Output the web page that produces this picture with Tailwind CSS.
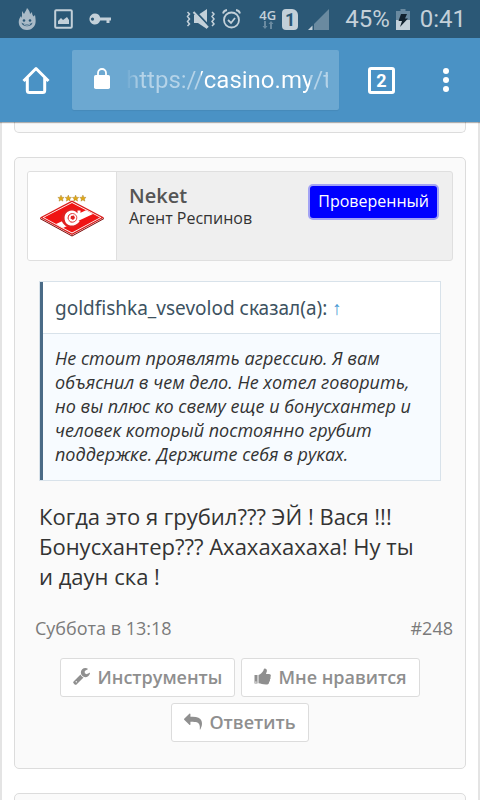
<!DOCTYPE html>
<html lang="ru">
<head>
  <meta charset="UTF-8" />
  <meta name="viewport" content="width=device-width, initial-scale=1.0" />
  <title>Форум - casino.my</title>
  <script src="https://cdn.jsdelivr.net/npm/@tailwindcss/browser@4"></script>
</head>
<body class="bg-white font-['Open_Sans',sans-serif] text-[#333] h-screen overflow-hidden flex flex-col">

  <!-- Status bar -->
  <div class="bg-[#2b5876] h-[38px] shrink-0 flex items-center justify-between pl-[18px] pr-3.5 font-[Roboto,sans-serif] text-[#c3d0d9]">
    <div class="flex items-center gap-4">
      <svg class="w-[18px] h-[22px]" viewBox="0 0 18 22" fill="#a9bac7">
        <path d="M9 0c2 2 3 4 3 6l2-2c0 2 .5 3 1.500 4.500L17 7c1 6 1 9-1 11.500C14 21 12 22 9 22s-5.500-1-7-3.500C0 15 .5 11 3 8l1 2 0-7 2 3C7 4 8.500 2 9 0z" />
        <g fill="#2b5876">
          <circle cx="6" cy="12.500" r="1.300" />
          <circle cx="12" cy="12.500" r="1.300" />
          <path d="M3.500 14.500c2 2 9 2 11 0-.5 5-10.500 5-11 0z" />
          <path d="M5.500 15.800c2 .8 5 .8 7 0-.5 2.500-6.500 2.500-7 0z" fill="#a9bac7" />
        </g>
      </svg>
      <svg class="w-[19px] h-5 ml-0.5" viewBox="0 0 19 20">
        <rect x="1.200" y="1.200" width="16.600" height="17.600" rx="1" fill="none" stroke="#c3d0d9" stroke-width="2" />
        <path d="M4 15v-3l3-3 2 2 4-3 2 3v4z" fill="#c3d0d9" />
      </svg>
      <svg class="w-[22px] h-[13px]" viewBox="0 0 22 13" fill="#c3d0d9">
        <path fill-rule="evenodd" d="M6 .5a5.500 5.500 0 0 1 5.200 4H22v3h-1.500V10h-3V7.500h-6.300A5.500 5.500 0 1 1 6 .5zM3.500 4.500a1.600 1.600 0 1 0 0 3.200 1.600 1.600 0 0 0 0-3.200z" />
      </svg>
    </div>
    <div class="flex items-center">
      <svg class="w-[30px] h-[22px]" viewBox="0 0 30 22" fill="none" stroke="#c3d0d9" stroke-width="1.500">
        <path d="M1.500 4l2 2-2 2.500 2 2.500-2 2.500 2 2.500-2 2M26 4l2 2-2 2.500 2 2.500-2 2.500 2 2.500-2 2" />
        <path d="M8 7h4l9-6v20l-9-6H8z" fill="#c3d0d9" stroke="none" />
        <path d="M8.500 2.500L23 18" stroke="#2b5876" stroke-width="2" />
        <path d="M7.500 4L22 19.500" stroke-width="2" />
      </svg>
      <svg class="w-[19px] h-5 ml-1.5" viewBox="0 0 19 20" fill="none" stroke="#c3d0d9" stroke-width="1.800">
        <circle cx="9.500" cy="11" r="7.500" />
        <path d="M6 11l3 3 4-5M1 4.500C1.500 2.500 3 1.300 5 1M18 4.500C17.500 2.500 16 1.300 14 1" />
      </svg>
      <div class="ml-[18px] flex flex-col items-center">
        <span class="text-[13px] leading-3 font-semibold font-['Open_Sans',sans-serif]">4G</span>
        <svg class="w-3 h-2" viewBox="0 0 12 8" fill="#6a8aa0">
          <path d="M2 0h2v5h1.500L3 8 .5 5H2zM8 8h2V3h1.500L9 0 6.500 3H8z" />
        </svg>
      </div>
      <div class="ml-1.5 w-4 h-[21px] rounded-sm rounded-tr-md bg-[#c3d0d9] text-[#2b5876] text-lg leading-[21px] font-bold text-center">1</div>
      <svg class="w-[21px] h-[21px] ml-2.5" viewBox="0 0 21 21">
        <path d="M6 15L21 0v21H6z" fill="#6a8aa0" />
        <path d="M0 21l4.500-4.500V21z" fill="#c3d0d9" />
      </svg>
      <span class="ml-4 text-2xl leading-6">45%</span>
      <svg class="w-[14px] h-[21px] ml-1.5" viewBox="0 0 14 21">
        <path d="M4.500 0h5v2H14v9H0V2h4.500z" fill="#6a8aa0" />
        <path d="M0 11h14v10H0z" fill="#c3d0d9" />
        <path d="M5 5h6l-2 4.500h3L4 18l2-6H2.500z" fill="#12222e" />
      </svg>
      <span class="ml-2.5 text-2xl leading-6">0:41</span>
    </div>
  </div>

  <!-- Browser toolbar -->
  <header class="bg-[#4a92c5] h-[84px] shrink-0 flex items-center pl-[22px] pr-[18px] shadow-[0_1px_1px_rgba(0,0,0,0.3)] relative z-10">
    <button type="button" aria-label="Домой">
      <svg class="w-7 h-7" viewBox="0 0 28 28" fill="none" stroke="#fff" stroke-width="3" stroke-linejoin="round">
        <path d="M1.500 15L14 2.500 26.500 15M5.300 12v12.500q0 2 2 2h13.400q2 0 2-2V12" />
      </svg>
    </button>
    <label class="ml-[22px] flex-1 min-w-0 h-[60px] flex items-center bg-[#6ca8d1] rounded-xs shadow-[0_1px_1px_rgba(0,0,0,0.06)] pl-[22px] pr-[11px]">
      <svg class="w-4 h-[21px] shrink-0 -mt-1" viewBox="0 0 16 21">
        <path d="M4 8V5a4 4 0 0 1 8 0v3" fill="none" stroke="#fff" stroke-width="1.800" />
        <rect y="7" width="16" height="14" rx="1.800" fill="#fff" />
      </svg>
      <input type="text" aria-label="Адрес" value="https://casino.my/t" class="ml-4 flex-1 min-w-0 h-9 indent-[-10px] font-[Roboto,sans-serif] text-2xl text-transparent caret-white outline-none bg-clip-text bg-linear-[90deg,#6ca8d1_0px,#b5d3e8_14px,#b5d3e8_75px,#fff_75px,#fff_184px,#b5d3e8_184px]" />
    </label>
    <button type="button" aria-label="Вкладки" class="ml-[29px] w-[27px] h-[27px] border-3 border-white rounded-[3px] text-white text-lg leading-[21px] font-bold font-[Roboto,sans-serif]">2</button>
    <button type="button" aria-label="Меню" class="ml-[39px]">
      <svg class="w-7 h-6" viewBox="0 0 28 24" fill="#fff">
        <circle cx="12" cy="3" r="3" />
        <circle cx="12" cy="12" r="3" />
        <circle cx="12" cy="21" r="3" />
      </svg>
    </button>
  </header>

  <!-- Thread -->
  <main class="flex-1 min-h-0 border-x-2 border-[#e4e4e4] px-3 flex flex-col gap-6">
    <div class="h-[11px] shrink-0 bg-[#fafafa] border border-t-0 border-[#dcdcdc] rounded-b-[5px]"></div>

    <article class="shrink-0 bg-[#fafafa] border border-[#dcdcdc] rounded-[5px] p-3 pt-[13px] pb-[26px]">
      <div class="flex h-[90px] bg-[#efefef] border border-[#dfdfdf] rounded-[3px]">
        <a href="#" aria-label="Neket" class="w-[89px] shrink-0 bg-white border-r border-[#dfdfdf] rounded-l-[2px] flex items-center justify-center">
          <svg class="w-16 h-[42px]" viewBox="0 0 64 42">
            <g fill="#e0a818" stroke="#8a6410" stroke-width="0.300">
              <path id="star" d="M21 0l.9 2.200 2.300.2-1.700 1.500.5 2.300-2-1.200-2 1.200.5-2.300-1.700-1.500 2.300-.2z" />
              <use href="#star" x="7.300" />
              <use href="#star" x="14.600" />
              <use href="#star" x="21.900" />
            </g>
            <path d="M0 23L32 40.500 64 23v1L32 41.500 0 24z" fill="#700" />
            <path d="M0 22.500L32 5.500l32 17L32 40z" fill="#d91a18" />
            <path d="M2.500 22.500L32 7l29.500 15.500L32 38.500z" fill="#fff" />
            <path d="M4 22.500L32 8l28 14.500L32 37.500z" fill="#f01414" />
            <path d="M16 29L46 15.300 53 19 23 33z" fill="#fff" />
            <path d="M37 17.500a8 7 0 1 0 1.500 9.500" fill="none" stroke="#e02020" stroke-width="5.500" />
            <path d="M39 15.500v5h-1.500q-4-5.500-9-2.500c-4 3-3 10 2 11 4 .6 6-1.500 8-3.500" fill="none" stroke="#fff" stroke-width="3" />
            <circle cx="32.500" cy="22.800" r="4.300" fill="#fff" stroke="#d22" stroke-width="0.800" />
            <path d="M31 21l3-.5 1 2.500-2 2-2.500-1.500zM28.500 20l1.500-1M35.500 19.500l1 2M30 26.500l1 0" fill="#d22" />
          </svg>
        </a>
        <div class="pl-3 pt-3 flex-1 min-w-0">
          <h3 class="text-xl leading-6 font-semibold text-[#555]">Neket</h3>
          <p class="text-base leading-5">Агент Респинов</p>
        </div>
        <em class="not-italic h-9 mt-3 mr-[13px] px-2 bg-[#00f] border-2 border-[#a3a3f5] rounded-[5px] text-white text-base leading-[30px]">Проверенный</em>
      </div>

      <blockquote class="mx-3 mt-5 border border-[#d8e2ea]">
        <div class="border-l-3 border-[#4a6b87] bg-[#f7fbff]">
          <div class="bg-white border-b border-[#d8e2ea] h-[52px] px-3 font-['Noto_Sans',sans-serif] text-[19px] leading-[52px] text-[#3d5261]">goldfishka_vsevolod сказал(а): <a href="#" class="text-[#4a9ad4]">↑</a></div>
          <p class="px-3 pt-3 pb-3.5 text-lg leading-6 italic">Не стоит проявлять агрессию. Я вам объяснил в чем дело. Не хотел говорить, но вы плюс ко свему еще и бонусхантер и человек который постоянно грубит поддержке. Держите себя в руках.</p>
        </div>
      </blockquote>

      <p class="ml-3 mr-6 mt-5 text-[22px] leading-[30px]">Когда это я грубил??? ЭЙ ! Вася !!! Бонусхантер??? Ахахахахаха! Ну ты и даун ска !</p>

      <div class="mt-[25px] pl-2 flex justify-between text-lg leading-6 text-[#7a7a7a]">
        <a href="#">Суббота в 13:18</a>
        <a href="#">#248</a>
      </div>

      <div class="mt-[18px] flex flex-wrap justify-center gap-1.5 text-lg leading-6 font-semibold text-[#8f8f8f]">
        <button type="button" class="h-[39px] px-3 pb-0.5 flex items-center gap-[7px] bg-white border border-[#dcdcdc] rounded-[3px]">
          <svg class="w-[17px] h-[17px]" viewBox="0 0 1664 1664" fill="currentColor">
            <path d="M384 1344q0-26-19-45t-45-19-45 19-19 45 19 45 45 19 45-19 19-45zm644-420l-682 682q-37 37-90 37-52 0-91-37L59 1498q-38-36-38-90 0-53 38-91l681-681q39 98 114.500 173.500T1028 924zm634-435q0 39-23 106-47 134-164.500 217.500T1216 896q-185 0-316.500-131.500T768 448t131.500-316.500T1216 0q58 0 121.500 16.500T1445 63q16 11 16 28t-16 28l-293 169v224l193 107q5-3 79-48.500t135.500-81T1630 454q15 0 23.500 10t8.500 25z" />
          </svg>
          Инструменты
        </button>
        <button type="button" class="h-[39px] px-3 pb-0.5 flex items-center gap-[7px] bg-white border border-[#dcdcdc] rounded-[3px]">
          <svg class="w-[17px] h-[17px]" viewBox="0 0 17 17" fill="currentColor">
            <path fill-rule="evenodd" d="M.5 7h3v8.500h-3zM1.300 13.500h1.200v1.200H1.300z" />
            <path d="M4.500 7C7 6.500 8 4.500 9 3.300 9.800 2.300 9.500.5 10.800.5c2 0 2.500 2 1.800 3.500L12 6h3c2 0 2.300 2 1.300 3 .6 1 .3 2-.4 2.600.3 1-.1 1.800-.8 2.400.1 1.500-.9 2.500-3.100 2.500-3.500 0-5-1-7.500-1.200z" />
          </svg>
          Мне нравится
        </button>
        <button type="button" class="h-[39px] px-3 pb-0.5 flex items-center gap-[7px] bg-white border border-[#dcdcdc] rounded-[3px]">
          <svg class="w-[18px] h-[17px]" viewBox="0 0 1792 1600" fill="currentColor">
            <path d="M1792 1056q0 166-127 451-3 7-10.500 24t-13.500 30-13 22q-12 17-28 17-15 0-23.500-10t-8.500-25q0-9 2.500-26.500t2.500-23.500q5-68 5-123 0-101-17.500-181t-48.500-138.500-80-101-105.500-69.500-133-42.500-154-21.500-175.500-6H640v256q0 26-19 45t-45 19-45-19L19 621Q0 602 0 576t19-45L531 19q19-19 45-19t45 19 19 45v256h224q713 0 875 403 53 134 53 333z" />
          </svg>
          Ответить
        </button>
      </div>
    </article>

    <div class="h-10 shrink-0 bg-[#fafafa] border border-[#dcdcdc] rounded-[5px]"></div>
  </main>
</body>
</html>
